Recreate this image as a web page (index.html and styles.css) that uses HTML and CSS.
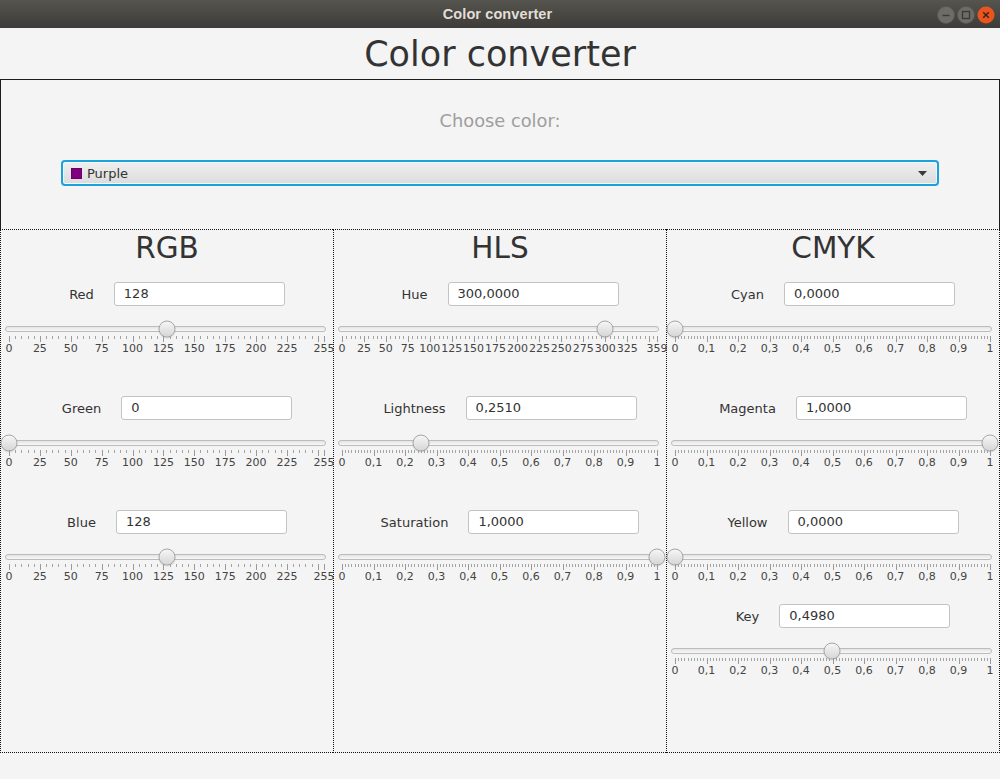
FILE: index.html
```html
<!DOCTYPE html>
<html lang="en">
<head>
<meta charset="utf-8">
<title>Color converter</title>
<link rel="stylesheet" href="styles.css">
</head>
<body>
<div class="titlebar">
  <span></span>
  <span class="wintitle">Color converter</span>
  <div class="winbtns">
    <svg class="wbtn" width="18" height="18" viewBox="0 0 18 18"><circle cx="9" cy="9" r="8.5" class="wgray"/><path d="M5.5 9.5h7" stroke="#3a3935" stroke-width="1.4"/></svg>
    <svg class="wbtn" width="18" height="18" viewBox="0 0 18 18"><circle cx="9" cy="9" r="8.5" class="wgray"/><rect x="5.5" y="5.5" width="7" height="7" fill="none" stroke="#3a3935" stroke-width="1.3"/></svg>
    <svg class="wbtn" width="18" height="18" viewBox="0 0 18 18"><circle cx="9" cy="9" r="8.5" fill="#e9541f"/><path d="M6.2 6.2l5.6 5.6M11.8 6.2l-5.6 5.6" stroke="#3a2015" stroke-width="1.4"/></svg>
  </div>
</div>

<h1 class="apptitle">Color converter</h1>

<div class="choose">
  <div class="choose-label">Choose color:</div>
  <div class="combo">
    <span class="swatch"></span>
    <span class="combo-text">Purple</span>
    <svg class="combo-arrow" width="9" height="5" viewBox="0 0 9 5"><path d="M0 0h9L4.5 5z" fill="#3a3a3a"/></svg>
  </div>
</div>

<div class="columns">
  <section class="col">
    <h2 class="colhead">RGB</h2>
    <div class="group first">
      <div class="row"><span class="lbl">Red</span><div class="field">128</div></div>
      <div class="slider" data-min="0" data-max="255" data-value="128" data-major="25" data-minor="4"></div>
    </div>
    <div class="group">
      <div class="row"><span class="lbl">Green</span><div class="field">0</div></div>
      <div class="slider" data-min="0" data-max="255" data-value="0" data-major="25" data-minor="4"></div>
    </div>
    <div class="group">
      <div class="row"><span class="lbl">Blue</span><div class="field">128</div></div>
      <div class="slider" data-min="0" data-max="255" data-value="128" data-major="25" data-minor="4"></div>
    </div>
  </section>

  <section class="col">
    <h2 class="colhead">HLS</h2>
    <div class="group first">
      <div class="row"><span class="lbl">Hue</span><div class="field">300,0000</div></div>
      <div class="slider" data-min="0" data-max="359" data-value="300" data-major="25" data-minor="4"></div>
    </div>
    <div class="group">
      <div class="row"><span class="lbl">Lightness</span><div class="field">0,2510</div></div>
      <div class="slider" data-min="0" data-max="1" data-value="0.251" data-major="0.1" data-minor="9"></div>
    </div>
    <div class="group">
      <div class="row"><span class="lbl">Saturation</span><div class="field">1,0000</div></div>
      <div class="slider" data-min="0" data-max="1" data-value="1" data-major="0.1" data-minor="9"></div>
    </div>
  </section>

  <section class="col last">
    <h2 class="colhead">CMYK</h2>
    <div class="group first">
      <div class="row"><span class="lbl">Cyan</span><div class="field">0,0000</div></div>
      <div class="slider" data-min="0" data-max="1" data-value="0" data-major="0.1" data-minor="9"></div>
    </div>
    <div class="group">
      <div class="row"><span class="lbl">Magenta</span><div class="field">1,0000</div></div>
      <div class="slider" data-min="0" data-max="1" data-value="1" data-major="0.1" data-minor="9"></div>
    </div>
    <div class="group">
      <div class="row"><span class="lbl">Yellow</span><div class="field">0,0000</div></div>
      <div class="slider" data-min="0" data-max="1" data-value="0" data-major="0.1" data-minor="9"></div>
    </div>
    <div class="group tight">
      <div class="row"><span class="lbl">Key</span><div class="field">0,4980</div></div>
      <div class="slider" data-min="0" data-max="1" data-value="0.498" data-major="0.1" data-minor="9"></div>
    </div>
  </section>
</div>
<script src="script.js"></script>
</body>
</html>
```

FILE: styles.css
```css
* { box-sizing: border-box; }
html, body { margin: 0; padding: 0; }
body {
  width: 1000px;
  height: 779px;
  overflow: hidden;
  background: #f4f4f4;
  font-family: "DejaVu Sans", "Liberation Sans", sans-serif;
  color: #333;
}

.titlebar {
  height: 28px;
  display: grid;
  grid-template-columns: 1fr auto 1fr;
  align-items: center;
  background: linear-gradient(#56544f, #3d3c38);
  padding-right: 5px;
}
.wintitle {
  font-family: "Liberation Sans", "DejaVu Sans", sans-serif;
  font-weight: bold;
  font-size: 14.5px;
  color: #e2ded6;
  letter-spacing: 0.1px;
}
.winbtns {
  justify-self: end;
  display: flex;
  gap: 2px;
  padding-top: 2px;
}
.wbtn { display: block; width: 18px; height: 18px; }
.wgray { fill: #6e6c67; stroke: #5a5853; stroke-width: 0.6; }

.apptitle {
  margin: 0;
  height: 51px;
  line-height: 53px;
  text-align: center;
  font-weight: normal;
  font-size: 35px;
  color: #333;
}

.choose {
  height: 150px;
  border: 1px solid #1c1c1c;
  border-bottom: none;
  padding: 30px 60px 0 60px;
}
.choose-label {
  text-align: center;
  font-size: 17.8px;
  line-height: 21px;
  color: #9e9e9e;
}
.combo {
  margin-top: 29px;
  height: 26px;
  border: 2px solid #1ba2d9;
  border-radius: 4px;
  background: linear-gradient(#efefef, #dcdcdc);
  box-shadow: inset 0 0 0 1px #f2f9fc;
  display: flex;
  align-items: center;
  padding: 0 8px 0 8px;
}
.swatch {
  width: 11px;
  height: 11px;
  background: #800080;
  border: 1px solid #6b006b;
}
.combo-text {
  margin-left: 5px;
  font-size: 13px;
  color: #333;
  flex: 1;
}
.combo-arrow { display: block; margin-right: 2px; }

.columns {
  display: grid;
  grid-template-columns: 333px 333px 334px;
  height: 524px;
}
.col {
  border-top: 1px dotted #111;
  border-bottom: 1px dotted #111;
  border-left: 1px dotted #111;
}
.col.last { border-right: 1px dotted #111; }

.colhead {
  margin: 0;
  height: 36px;
  line-height: 36px;
  text-align: center;
  font-weight: normal;
  font-size: 29.5px;
  color: #333;
}

.group { margin-top: 41px; }
.group.first { margin-top: 16px; }
.group.tight { margin-top: 21px; }

.row {
  display: flex;
  justify-content: center;
  align-items: center;
  gap: 20px;
  padding-left: 20px;
  height: 24px;
}
.lbl { font-size: 13px; color: #333; }
.field {
  width: 171px;
  height: 24px;
  background: #fff;
  border: 1px solid #c3c3c3;
  border-radius: 3px;
  font-size: 13px;
  line-height: 22px;
  padding-left: 9px;
  color: #333;
}

.slider {
  margin: 15px 7px 0 4px;
}
.thumbrow {
  position: relative;
  height: 16px;
  display: flex;
  align-items: center;
}
.track {
  flex: 1;
  height: 6px;
  border: 1px solid #bcbcbc;
  border-radius: 3px;
  background: linear-gradient(#e4e4e4, #f8f8f8);
}
.thumbrange {
  position: absolute;
  left: 4px;
  right: 2px;
  top: 0;
  bottom: 0;
}
.thumb {
  position: absolute;
  top: 50%;
  width: 17px;
  height: 17px;
  border-radius: 50%;
  transform: translate(-50%, -50%);
  background: linear-gradient(#f6f6f6, #d6d6d6);
  border: 1px solid #a6a6a6;
  box-shadow: 0 1px 1px rgba(0,0,0,0.12);
}
.ticks {
  position: relative;
  margin: -1px 2px 0 4px;
  height: 6px;
}
.tick {
  position: absolute;
  top: 0;
  width: 1px;
  height: 3px;
  background: #a3a3a3;
}
.tick.major { height: 6px; background: #9a9a9a; }
.labels {
  position: relative;
  margin: 0 2px 0 4px;
  height: 13px;
}
.tlabel {
  position: absolute;
  top: 0;
  font-size: 11px;
  line-height: 14px;
  color: #444;
  transform: translateX(-50%);
  white-space: nowrap;
}
```

FILE: script.js
```js
document.querySelectorAll('.slider').forEach(function (s) {
  var min = +s.dataset.min, max = +s.dataset.max, val = +s.dataset.value;
  var major = +s.dataset.major, minor = +s.dataset.minor;
  var eps = 1e-9;
  function pct(v) { return ((v - min) / (max - min) * 100) + '%'; }

  var row = document.createElement('div'); row.className = 'thumbrow';
  var track = document.createElement('div'); track.className = 'track';
  var range = document.createElement('div'); range.className = 'thumbrange';
  var thumb = document.createElement('div'); thumb.className = 'thumb';
  thumb.style.left = pct(val);
  range.appendChild(thumb); row.appendChild(track); row.appendChild(range);

  var ticks = document.createElement('div'); ticks.className = 'ticks';
  var labels = document.createElement('div'); labels.className = 'labels';

  var majors = [];
  for (var i = 0; min + i * major <= max + eps; i++) majors.push(min + i * major);
  if (Math.abs(majors[majors.length - 1] - max) > eps) majors.push(max);

  var step = major / (minor + 1);
  for (var j = 0; min + j * step < max - eps; j++) {
    if (j % (minor + 1) === 0) continue;
    var t = document.createElement('div'); t.className = 'tick';
    t.style.left = pct(min + j * step);
    ticks.appendChild(t);
  }
  majors.forEach(function (v, idx) {
    var t = document.createElement('div'); t.className = 'tick major';
    t.style.left = pct(v);
    ticks.appendChild(t);
    if (idx === majors.length - 2 && (max - v) < major * 0.5) return;
    var l = document.createElement('span'); l.className = 'tlabel';
    l.style.left = pct(v);
    var r = Math.round(v * 1000) / 1000;
    l.textContent = String(r).replace('.', ',');
    labels.appendChild(l);
  });

  s.appendChild(row); s.appendChild(ticks); s.appendChild(labels);
});
```
